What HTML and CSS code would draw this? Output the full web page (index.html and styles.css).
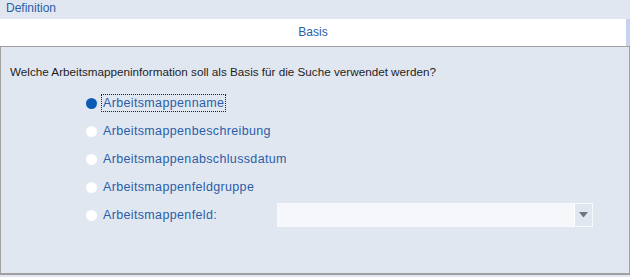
FILE: index.html
```html
<!DOCTYPE html>
<html lang="de">
<head>
  <meta charset="UTF-8">
  <title>Definition</title>
  <link rel="stylesheet" href="styles.css">
</head>
<body>
  <div class="section-title">Definition</div>
  <div class="tabbar">
    <div class="tab">Basis</div>
    <div class="tab-scroll"></div>
  </div>
  <div class="panel">
    <p class="question">Welche Arbeitsmappeninformation soll als Basis für die Suche verwendet werden?</p>
    <div class="options">
      <div class="option">
        <span class="radio checked"></span>
        <span class="label focused">Arbeitsmappenname</span>
      </div>
      <div class="option">
        <span class="radio"></span>
        <span class="label">Arbeitsmappenbeschreibung</span>
      </div>
      <div class="option">
        <span class="radio"></span>
        <span class="label">Arbeitsmappenabschlussdatum</span>
      </div>
      <div class="option">
        <span class="radio"></span>
        <span class="label">Arbeitsmappenfeldgruppe</span>
      </div>
      <div class="option">
        <span class="radio"></span>
        <span class="label field-label">Arbeitsmappenfeld:</span>
        <div class="combo">
          <div class="combo-text"></div>
          <div class="combo-button">
            <svg width="9" height="6" viewBox="0 0 9 6"><path d="M0 0H9L4.5 5.5Z" fill="#6f7580"/></svg>
          </div>
        </div>
      </div>
    </div>
  </div>
</body>
</html>
```

FILE: styles.css
```css
body {
  margin: 0;
  background-color: #e1e7f1;
  font-family: "Segoe UI", "Liberation Sans", Arial, sans-serif;
  font-size: 12px;
  width: 630px;
  height: 277px;
  overflow: hidden;
}
.section-title {
  height: 19px;
  line-height: 17px;
  padding-left: 6px;
  color: #2a5ea8;
  background-color: #e1e7f1;
}
.tabbar {
  display: flex;
  height: 27px;
  background: white;
}
.tab {
  flex: 1;
  text-align: center;
  line-height: 27px;
  color: #2a5ea8;
}
.tab-scroll {
  width: 4px;
  background-color: #c8d3ee;
}
.panel {
  height: 229px;
  box-sizing: border-box;
  border: 1px solid #a0a0a0;
  border-bottom-width: 2px;
  background-color: #e1e7f1;
  padding: 0 9px;
}
.question {
  margin: 17px 0 0;
  color: #1e1e1e;
  font-size: 11.7px;
  line-height: 16px;
}
.options {
  margin-top: 9px;
  padding-left: 76px;
}
.option {
  display: flex;
  align-items: center;
  height: 28px;
}
.radio {
  width: 11px;
  height: 11px;
  border-radius: 50%;
  background: white;
  margin-right: 4px;
}
.radio.checked {
  background-color: #0b5bb5;
}
.label {
  color: #2a5ea8;
  font-size: 12.5px;
  letter-spacing: 0.35px;
  line-height: 14px;
  padding: 1px 1px;
  border: 1px dotted transparent;
}
.label.focused {
  border-color: #222;
}
.field-label {
  width: 172px;
}
.combo {
  display: flex;
  width: 316px;
  height: 24px;
  box-sizing: border-box;
  border: 1px solid #f7f9fc;
  background-color: #f5f7fb;
}
.combo-text {
  flex: 1;
}
.combo-button {
  width: 17px;
  display: flex;
  align-items: center;
  justify-content: center;
  background-color: #e1e7f1;
  border-left: 1px solid white;
}
```
